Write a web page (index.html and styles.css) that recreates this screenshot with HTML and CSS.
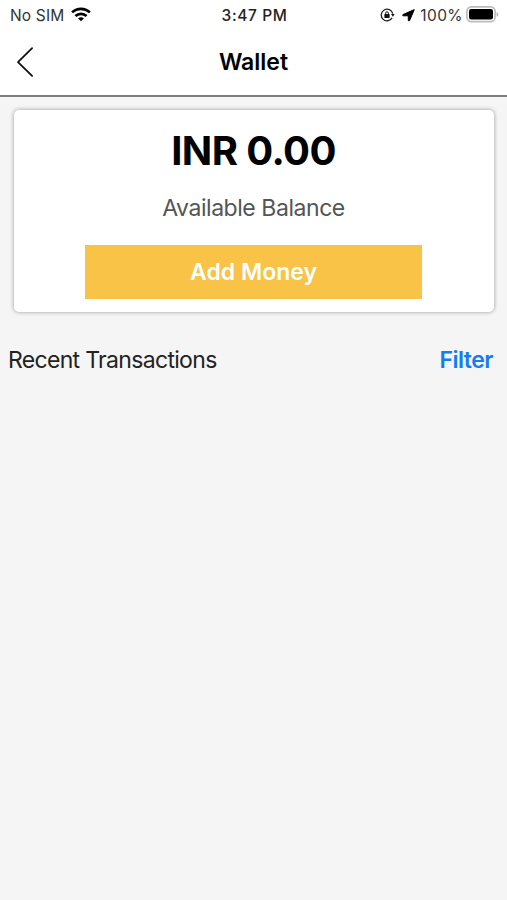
FILE: index.html
```html
<!DOCTYPE html>
<html lang="en">
<head>
<meta charset="utf-8">
<title>Wallet</title>
<link rel="stylesheet" href="styles.css">
</head>
<body>
<div class="status">
  <div class="status-left">
    <span class="carrier">No SIM</span>
    <svg class="wifi" width="20" height="15" viewBox="0 0 20 15" fill="none" stroke="#000" stroke-width="2.6">
      <path d="M1.1 5.4C6.2.7 13.8.7 18.9 5.4"/>
      <path d="M4.4 9C7.6 6.1 12.4 6.1 15.6 9"/>
      <path d="M10 14.3 7.1 11.4C8.7 9.9 11.3 9.9 12.9 11.4Z" fill="#000" stroke="none"/>
    </svg>
  </div>
  <span class="clock">3:47 PM</span>
  <div class="status-right">
    <svg class="lock" width="15" height="14" viewBox="0 0 15 14">
      <path d="M12.1 9.9A5.8 5.8 0 1 1 12.7 5.6" fill="none" stroke="#222" stroke-width="1.3"/>
      <path d="M11 6.1h3.6l-1.7 2.6z" fill="#111"/>
      <path d="M5.6 6.5V5.2a1.4 1.4 0 0 1 2.8 0v1.3" fill="none" stroke="#111"/>
      <rect x="4.4" y="6" width="5.2" height="4.1" rx=".6" fill="#111"/>
    </svg>
    <svg class="location" width="13" height="13" viewBox="0 0 13 13">
      <path d="M12.3.6 7.6 11.6Q6.9 12.4 6.3 11.6V6.8H1.1Q.1 6.5 1 5.6Z" fill="#000" stroke="#000" stroke-width="1" stroke-linejoin="round"/>
    </svg>
    <span class="percent">100%</span>
    <svg class="battery" width="33" height="17" viewBox="0 0 33 17">
      <rect x=".9" y=".9" width="28.2" height="14.8" rx="4.4" fill="#fff" stroke="#bdbdbd" stroke-width="1.7"/>
      <rect x="3" y="3.1" width="24" height="10.4" rx="2.2" fill="#000"/>
      <path d="M30.7 6.1Q32.2 6.7 32.2 8.4T30.7 10.7Z" fill="#aaa"/>
    </svg>
  </div>
</div>
<header class="nav">
  <svg class="back" width="18" height="32" viewBox="0 0 18 32" fill="none" stroke="#111" stroke-width="1.8" stroke-linecap="round" stroke-linejoin="round">
    <path d="M16.1 2.1 2 16.1 16.1 29.9"/>
  </svg>
  <h1 class="title">Wallet</h1>
</header>
<main>
  <section class="card">
    <div class="amount">INR 0.00</div>
    <div class="label">Available Balance</div>
    <button class="add">Add Money</button>
  </section>
  <div class="row">
    <span class="recent">Recent Transactions</span>
    <a class="filter">Filter</a>
  </div>
</main>
</body>
</html>
```
FILE: styles.css
```css
* { box-sizing: border-box; }
body {
  margin: 0;
  min-height: 900px;
  background: #f5f5f5;
  color: #000;
  font-family: Inter, "Liberation Sans", sans-serif;
}
svg { display: block; flex: none; }
.status {
  display: grid;
  grid-template-columns: 1fr auto 1fr;
  height: 30px;
  padding: 0 8px 0 10px;
  background: #fff;
  font-size: 15.5px;
  line-height: 30px;
}
.status-left, .status-right { display: flex; align-items: center; height: 30px; }
.status-right { justify-content: flex-end; }
.carrier, .clock, .percent { padding-top: 1px; }
.carrier { color: #333; width: 55px; white-space: nowrap; letter-spacing: .15px; }
.wifi { margin: 0 0 1px 6px; }
.clock { font-weight: 500; color: #222; letter-spacing: .6px; }
.location { margin-left: 7px; }
.percent { color: #333; margin-left: 5px; letter-spacing: .4px; }
.battery { margin: 0 0 1px 3px; }
.nav {
  display: grid;
  grid-template-columns: 1fr auto 1fr;
  align-items: center;
  height: 67px;
  padding: 0 16px 1px;
  background: #fff;
  border-bottom: 2px solid #7d7d7d;
}
.title { margin: 0; font-size: 23px; line-height: 32px; font-weight: 600; }
.card {
  display: flex;
  flex-direction: column;
  align-items: center;
  height: 202px;
  margin: 13px 13px 0 14px;
  padding: 16px 1px 0 0;
  background: #fff;
  border-radius: 5px;
  box-shadow: 0 0 4px rgba(0, 0, 0, .38);
}
.amount { font-size: 40px; line-height: 50px; font-weight: 700; letter-spacing: -.6px; }
.label { margin-top: 17px; font-size: 23px; line-height: 30px; color: #555; letter-spacing: -.45px; }
.add {
  width: 337px;
  height: 54px;
  margin-top: 22px;
  padding: 1px 0 0;
  border: 0;
  background: #f8c346;
  color: #fff;
  font: 600 23px/53px Inter, "Liberation Sans", sans-serif;
}
.row {
  display: flex;
  justify-content: space-between;
  margin-top: 33px;
  padding: 0 14px 0 8px;
  font-size: 23px;
  line-height: 30px;
}
.recent { color: #222; letter-spacing: -.68px; }
.filter { color: #147bf3; font-weight: 600; letter-spacing: -.5px; }
```
